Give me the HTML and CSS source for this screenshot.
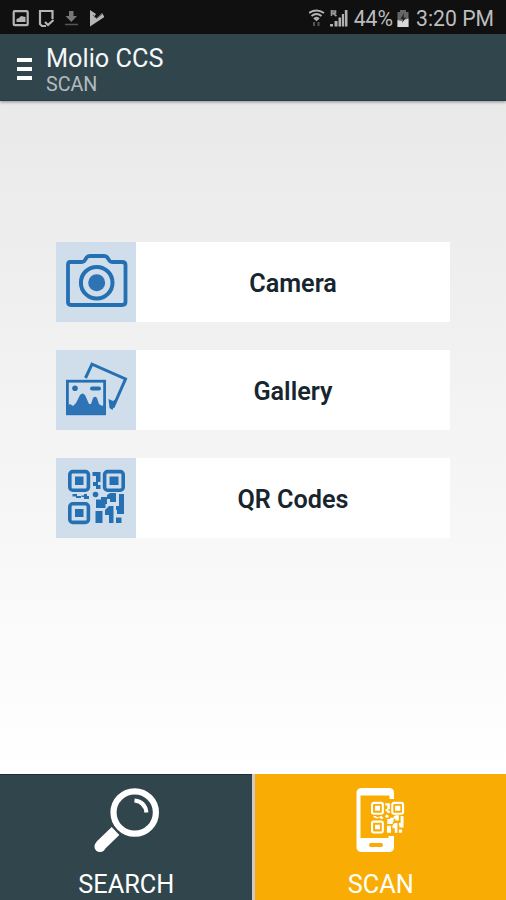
FILE: index.html
```html
<!DOCTYPE html>
<html lang="en">
<head>
  <meta charset="UTF-8" />
  <title>Molio CCS</title>
  <link rel="stylesheet" href="styles.css">
</head>
<body>

<div class="status-bar">
  <svg class="status-left" width="92" height="20" viewBox="0 0 92 20">
    <rect x="1.700" y="2.200" width="14" height="14" rx="1" fill="none" stroke="#b5b5b5" stroke-width="2.200"/>
    <path d="M4.500 13V10L7 9L9 7L13.500 8V13Z" fill="#b5b5b5"/>
    <path d="M34 17H30L28 15V2H40.500V10" fill="none" stroke="#b5b5b5" stroke-width="2.200"/>
    <path d="M33 13L36 16L41.500 11" fill="none" stroke="#b5b5b5" stroke-width="2.200"/>
    <path d="M57 2H61.500V7H65L59.300 13L53.500 7H57Z" fill="#777"/>
    <path d="M53 15.500H66" stroke="#555" stroke-width="1.500"/>
    <path d="M78 1L84 5L82 8L85 9L90 4L92.500 8L78 17.500Z" fill="#b5b5b5"/>
    <path d="M81 6L84.500 9.500L90 5" fill="none" stroke="#555" stroke-width="1"/>
  </svg>
  <div class="status-right">
    <svg width="42" height="20" viewBox="0 0 42 20">
      <g fill="none" stroke="#b5b5b5" stroke-width="1.900">
        <path d="M0 4Q7.500 -1 15 4"/>
        <path d="M2.500 7Q7.500 3 12.500 7"/>
        <path d="M5 10Q7.500 7.500 10 10"/>
      </g>
      <path d="M5.500 10H9.500L7.500 12.500Z" fill="#b5b5b5"/>
      <path d="M5 13V17M9.500 13V17" stroke="#555" stroke-width="2"/>
      <path d="M21 17.500V15H24V17.500ZM25.500 17.500V12H28.500V17.500ZM29.500 17.500V8.500H32V17.500ZM32.800 17.500V5H35V17.500ZM35.800 17.500V1H38.500V17.500Z" fill="#b0b0b0"/>
      <path d="M22.500 1V7M22.500 2H26.500V4H23.500L27.500 7" fill="none" stroke="#999" stroke-width="1.600"/>
    </svg>
    <span class="battery-level">44%</span>
    <svg width="12" height="20" viewBox="0 0 12 20">
      <path d="M3 1H9V3H11.500V18H.5V3H3Z" fill="#666"/>
      <path d="M.5 11L4 12L11.500 9.500V18H.5Z" fill="#d8d8d8"/>
      <path d="M7 4L3.500 10H6L5 14L9 8.500H6.500Z" fill="#222"/>
    </svg>
    <span class="clock">3:20 PM</span>
  </div>
</div>

<header class="app-bar">
  <div class="menu-icon"><i></i><i></i><i></i></div>
  <div class="titles">
    <h1>Molio CCS</h1>
    <p>SCAN</p>
  </div>
</header>

<main class="options">
  <div class="option">
    <svg class="option-icon" viewBox="0 0 80 80">
      <path d="M14 20H26Q28 20 29 18L31 15Q32 14 34 14H48Q50 14 51 15L53 18Q54 20 56 20H66Q69.500 20 69.500 23V60Q69.500 63 66 63H15Q12 63 12 60V23Q12 20 14 20Z" fill="none" stroke="#2470b3" stroke-width="3.800"/>
      <circle cx="40.700" cy="40.700" r="15.800" fill="none" stroke="#2470b3" stroke-width="4"/>
      <circle cx="40.700" cy="40.700" r="8.500" fill="#2f73b7"/>
    </svg>
    <span class="option-label">Camera</span>
  </div>

  <div class="option">
    <svg class="option-icon" viewBox="0 0 80 80">
      <path d="M29.500 28L36 14.200L69.500 29L57 57.500" fill="none" stroke="#2470b3" stroke-width="3"/>
      <path d="M52.500 49L57 51L60 49L56.500 60L53.500 58Z" fill="#2470b3"/>
      <rect x="11.400" y="31.200" width="37.200" height="32.600" fill="none" stroke="#2470b3" stroke-width="2.800"/>
      <circle cx="19" cy="38.200" r="2.800" fill="#2470b3"/>
      <rect x="34" y="36.500" width="11" height="4" rx="2" fill="#2470b3"/>
      <path d="M11 56L14 54L17 56L20 53L24 45Q26.500 42 29 45L33 54L35 54L37 48Q39 45.500 41 48L43 54L46 56L49 54V64H11Z" fill="#2f73b7"/>
    </svg>
    <span class="option-label">Gallery</span>
  </div>

  <div class="option">
    <svg class="option-icon" viewBox="0 0 80 80">
      <g id="qr" fill="#2470b3">
        <g fill="none" stroke="#2470b3" stroke-width="3.600">
          <rect x="13.800" y="13.600" width="18.600" height="18.600" rx="3"/>
          <rect x="48.600" y="13.600" width="18.600" height="18.600" rx="3"/>
          <rect x="13.800" y="45.800" width="18.600" height="18.600" rx="3"/>
        </g>
        <path d="M19 18.500H27.500V27H19ZM53.500 18.500H62.500V27H53.500ZM19 51H27.500V59H19Z"/>
        <path d="M36.500 14H44.500V24H42V27H44.500V31H40V28H37V24H40V18H36.500Z"/>
        <path d="M16.500 36H21V38H25V40H20V38.500H16.500ZM28 36H31V38H33V41H28V39H25.500V37.500H28Z"/>
        <circle cx="39.500" cy="36.500" r="2.800"/>
        <path d="M40 41.500H45V39H51V37L54 35H60V44H54V41H51V46H49.500V50H40Z"/>
        <path d="M63 36H68V56H61V52H60V48H63ZM39.500 53H46.500V65H39.500ZM49 52L53 48H57.500V65H53V57H49ZM60 59.500H65.500V65H60Z"/>
      </g>
    </svg>
    <span class="option-label">QR Codes</span>
  </div>
</main>

<nav class="tabs">
  <div class="tab">
    <svg class="tab-icon" viewBox="0 0 72 72">
      <circle cx="44.700" cy="32.500" r="21.200" fill="none" stroke="#fff" stroke-width="6.200"/>
      <path d="M44.500 20.500Q55 21.500 56.500 32.500" fill="none" stroke="#fff" stroke-width="4"/>
      <path d="M25.500 51L10 66" stroke="#fff" stroke-width="11"/>
      <circle cx="10" cy="66.500" r="5.500" fill="#fff"/>
    </svg>
    <span>SEARCH</span>
  </div>
  <div class="tab active">
    <svg class="tab-icon" viewBox="0 0 72 72">
      <path fill-rule="evenodd" d="M18 8H45Q50 8 50 13V19H45.500V15.500H16.500V58H44.500V56H50V67Q50 72 45 72H18Q12.500 72 12.500 67V13Q12.500 8 18 8ZM27 63Q25 63 25 65Q25 67 27 67H37Q39 67 39 65Q39 63 37 63Z" fill="#fff"/>
      <svg class="mini-qr" x="20" y="15" width="46.500" height="46.500" viewBox="0 0 80 80">
        <use href="#qr"/>
      </svg>
    </svg>
    <span>SCAN</span>
  </div>
</nav>

</body>
</html>
```

FILE: styles.css
```css
:root {
  --bar-color: #31454c;
  --accent-color: #f9ad04;
  --icon-bg: #cfdeea;
}

* {
  box-sizing: border-box;
}

body {
  font-family: Roboto, sans-serif;
  margin: 0;
  height: 900px;
  display: flex;
  flex-direction: column;
  background: linear-gradient(#e9e9e9 100px, #fff 774px);
  overflow: hidden;
}

svg {
  display: block;
}

.status-bar {
  height: 34px;
  flex: none;
  display: flex;
  justify-content: space-between;
  align-items: center;
  padding: 3px 12px 0;
  background: #101010;
  color: #bdbdbd;
  font-size: 21.2px;
}

.status-right {
  display: flex;
  align-items: center;
}

.battery-level {
  margin: 0 4px 0 3px;
}

.clock {
  margin-left: 7px;
}

.app-bar {
  height: 67px;
  flex: none;
  display: flex;
  padding: 9px 17px 0;
  background: var(--bar-color);
  border-bottom: 1px solid #293b43;
  box-shadow: 0 1px 3px rgba(0, 0, 0, 0.4);
}

.menu-icon {
  width: 15px;
  margin: 15px 14px 0 0;
}

.menu-icon i {
  display: block;
  height: 4px;
  margin-bottom: 5px;
  background: #fff;
}

.titles h1 {
  margin: 1px 0 0;
  font-size: 25.3px;
  line-height: 30px;
  font-weight: 400;
  color: #f5f8f9;
}

.titles p {
  margin: 0;
  font-size: 19.7px;
  line-height: 21px;
  color: #b2bcc0;
}

.options {
  flex: 1;
  display: flex;
  flex-direction: column;
  gap: 28px;
  padding: 141px 56px 0;
}

.option {
  height: 80px;
  display: flex;
  background: #fff;
}

.option-icon {
  width: 80px;
  height: 80px;
  background: var(--icon-bg);
}

.option-label {
  flex: 1;
  padding-top: 4px;
  text-align: center;
  font-size: 25.2px;
  line-height: 76px;
  font-weight: 600;
  color: #17262e;
}

.tabs {
  height: 126px;
  flex: none;
  display: flex;
  gap: 3px;
  background: #cfcac8;
}

.tab {
  width: 252px;
  display: flex;
  flex-direction: column;
  align-items: center;
  padding-top: 5px;
  background: var(--bar-color);
  border-top: 1px solid #1b2d39;
  color: #fff;
  font-size: 25.3px;
  line-height: 30px;
}

.tab-icon {
  width: 72px;
  height: 72px;
  margin-bottom: 18px;
}

.tab span {
  padding-left: 1px;
}

.tab.active {
  background: var(--accent-color);
  border-top-color: var(--accent-color);
}

.mini-qr {
  filter: brightness(0) invert(1);
}
```
